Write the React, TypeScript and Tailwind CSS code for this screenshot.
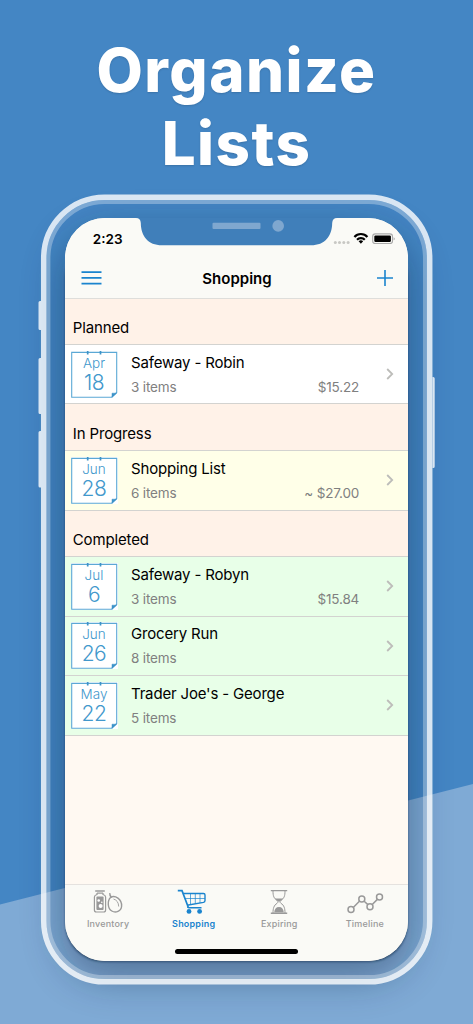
type Trip = { month: string; day: string; name: string; items: string; price?: string };
type Section = { title: string; tone: string; trips: Trip[] };

const sections: Section[] = [
  {
    title: 'Planned',
    tone: 'bg-white',
    trips: [{ month: 'Apr', day: '18', name: 'Safeway - Robin', items: '3 items', price: '$15.22' }],
  },
  {
    title: 'In Progress',
    tone: 'bg-[#ffffe8]',
    trips: [{ month: 'Jun', day: '28', name: 'Shopping List', items: '6 items', price: '~ $27.00' }],
  },
  {
    title: 'Completed',
    tone: 'bg-[#e8ffe8]',
    trips: [
      { month: 'Jul', day: '6', name: 'Safeway - Robyn', items: '3 items', price: '$15.84' },
      { month: 'Jun', day: '26', name: 'Grocery Run', items: '8 items' },
      { month: 'May', day: '22', name: "Trader Joe's - George", items: '5 items' },
    ],
  },
];

// Blue backdrop, diagonal highlight and the glassy phone body
const Backdrop = () => (
  <svg className="absolute inset-0" width="473" height="1024" viewBox="0 0 473 1024">
    <defs>
      <filter id="soft" x="-30%" y="-30%" width="160%" height="160%">
        <feGaussianBlur stdDeviation="20" />
      </filter>
      <filter id="tight" x="-10%" y="-10%" width="120%" height="120%">
        <feGaussianBlur stdDeviation="1" />
      </filter>
    </defs>
    <rect width="473" height="1024" fill="#4486c4" />
    <path d="M0 904.5 473 784V1024H0Z" fill="#7faad5" />
    <rect x="62" y="232" width="349" height="746" rx="46" fill="#0c2440" opacity="0.4" filter="url(#soft)" />
    <g fill="#fff" opacity="0.8">
      <path d="M41 301h-1a1.5 1.5 0 0 0-1.5 1.5v26a1.5 1.5 0 0 0 1.5 1.5h1zM41 358h-1a1.5 1.5 0 0 0-1.5 1.5v53a1.5 1.5 0 0 0 1.5 1.5h1zM41 431h-1a1.5 1.5 0 0 0-1.5 1.5v53.5a1.5 1.5 0 0 0 1.5 1.5h1zM432.5 377h.7a1.5 1.5 0 0 1 1.5 1.5v88a1.5 1.5 0 0 1-1.5 1.5h-.7z" />
    </g>
    <rect x="43.7" y="197.2" width="386" height="784.6" rx="61" fill="none" stroke="#fff" strokeWidth="5.5" opacity="0.8" />
    <rect x="48.4" y="201.9" width="376.6" height="775.2" rx="56.5" fill="none" stroke="#fff" strokeWidth="4" opacity="0.3" />
    <rect x="65.3" y="240" width="342.4" height="721.8" rx="38" fill="#0f2a45" opacity="0.6" filter="url(#tight)" />
  </svg>
);

// Notch cut-out with speaker and camera
const Notch = () => (
  <svg className="absolute left-[70px] top-0" width="203" height="28" viewBox="0 0 203 28">
    <path d="M0 0H1Q5.5 0 5.8 5C6 18 13 27.3 27 27.3H176C190 27.3 197 18 197.2 5Q197.5 0 202 0H203V-1H0Z" fill="#407fba" />
    <rect x="77.5" y="4.8" width="48" height="6.2" rx="1" fill="#7fa7cf" />
    <circle cx="143.2" cy="7.9" r="5.8" fill="#7fa7cf" />
  </svg>
);

const StatusIcons = () => (
  <svg width="62" height="14" viewBox="0 0 62 14">
    <g fill="#c8c8c4">
      <circle cx="2.3" cy="10.5" r="1.5" />
      <circle cx="6.5" cy="10.5" r="1.5" />
      <circle cx="10.8" cy="10.5" r="1.5" />
      <circle cx="15.1" cy="10.5" r="1.5" />
    </g>
    <g fill="none" stroke="#000" strokeWidth="2.2">
      <path d="M21.4 4.9a8.7 8.7 0 0 1 13 0" />
      <path d="M24 7.7a5.4 5.4 0 0 1 7.8 0" />
    </g>
    <path d="M27.9 11.8 25.6 9.3a3.3 3.3 0 0 1 4.6 0z" />
    <rect x="39.7" y="1.9" width="19.8" height="9.6" rx="2.6" fill="none" stroke="#aaa" strokeWidth="1.1" />
    <rect x="41.3" y="3.5" width="16.6" height="6.5" rx="1.2" />
    <path d="M60.6 5.2q1.2.5 1.2 1.5t-1.2 1.5z" fill="#aaa" />
  </svg>
);

const DateBadge = ({ month, day }: { month: string; day: string }) => (
  <div className="relative h-[47px] w-[47px] shrink-0 text-center text-[#4298cc]">
    <svg className="absolute inset-0" width="47" height="47" viewBox="0 0 47 47">
      <rect width="47" height="47" fill="#fff" />
      <path d="M.7 1.4H45.7V41.5L40.7 46.2H.7Z" fill="none" stroke="#5ba8d5" strokeWidth="1.1" />
      <path d="M41 46.3V42.2H45.6Z" fill="#3d93c8" stroke="#3d93c8" strokeWidth=".5" />
      <path d="M16.7 0v3.6M29.5 0v3.6" stroke="#3d93c8" strokeWidth="1.7" />
    </svg>
    <div className="relative flex flex-col pr-[1px] pt-[3px]">
      <span className="text-[13.5px] font-light leading-[18px]">{month}</span>
      <span className="text-[21px] font-light leading-[22px] tracking-[-0.5px]">{day}</span>
    </div>
  </div>
);

const TripRow = ({ trip, tone }: { trip: Trip; tone: string }) => (
  <div className={`flex h-[59.5px] items-center border-b border-[#d3d3d0] pl-[5.7px] pr-[13.5px] ${tone}`}>
    <DateBadge month={trip.month} day={trip.day} />
    <div className="ml-[13px] flex-1 pt-[1px]">
      <div className="text-[15px] leading-[22px] tracking-[-0.17px] text-black">{trip.name}</div>
      <div className="mt-[2px] flex justify-between text-[13.5px] leading-[22px] tracking-[-0.15px] text-[#808080]">
        <span>{trip.items}</span>
        <span>{trip.price}</span>
      </div>
    </div>
    <svg className="ml-[27px]" width="8" height="12" viewBox="0 0 8 12">
      <path d="m1.2 1 5 5-5 5" fill="none" stroke="#bdbdba" strokeWidth="1.8" />
    </svg>
  </div>
);

const InventoryIcon = () => (
  <svg width="30" height="26" viewBox="0 0 30 26" fill="none" stroke="#9a9a9a">
    <path d="M2.2 2h9.600" strokeWidth="1.5" />
    <path d="M4 4.2h6M4 4v1.5Q1.4 6.3 1.4 8v13q0 2 2 2h7.2q2 0 2-2V8Q12.6 6.3 10 5.5V4" strokeWidth="1.2" />
    <rect x="3.4" y="7.5" width="7.2" height="13.5" rx="1" fill="#999" stroke="none" />
    <g fill="#fff" stroke="none">
      <circle cx="5.7" cy="11.5" r="1.3" />
      <circle cx="7.6" cy="17" r="2" />
      <circle cx="8.8" cy="13.3" r=".8" />
    </g>
    <path d="M16.8 4.2q-.3 2.2 1.8 4.3" strokeWidth="1.5" />
    <path d="M17.8 8.3C22 6 29 10 28.6 17.2 28.2 22.5 22.5 24.2 18.8 22 14.800 19.800 13.800 12 17.800 8.300Z" strokeWidth="1.4" />
    <path d="M20.5 10q5 1.5 5.2 7.5" strokeWidth=".9" />
  </svg>
);

const CartIcon = () => (
  <svg className="mr-[4px]" width="30" height="26" viewBox="0 0 30 26" fill="none" stroke="#1a84ce">
    <path d="M.8 1.7H5L11.2 18" strokeWidth="1.7" />
    <path d="M6.2 4.5H26.5Q28 4.5 28 6V11.5Q28 13 26.5 13.4L10 16.3M24.5 18.8H12q-1.5 0-1.5-1.2" strokeWidth="1.4" />
    <path d="M8 9.5H28M13.5 4.5v11M18.3 4.5v10M23 4.5v9.5" strokeWidth=".7" />
    <circle cx="12" cy="22.4" r="2.4" fill="#1a84ce" stroke="none" />
    <circle cx="22.6" cy="22.4" r="2.4" fill="#1a84ce" stroke="none" />
  </svg>
);

const HourglassIcon = () => (
  <svg width="18" height="26" viewBox="0 0 18 26" fill="none" stroke="#999">
    <path d="M.8 1.6h16.4M.8 24.3h16.4" strokeWidth="1.4" />
    <path d="M3 2c0 5 .8 7.3 4.2 9.5 1 .7 1 2 0 2.7C3.8 16.3 3 19.5 3 24M15 2c0 5-.8 7.3-4.2 9.5-1 .7-1 2 0 2.7 3.4 2.1 4.2 5.3 4.2 9.8" strokeWidth="1" />
    <path d="M5 9.5h8Q11.5 11.5 9.5 12.5h-1Q6.5 11.5 5 9.5ZM4.2 23.6C4.5 20 6 18 9 18s4.5 2 4.8 5.6Z" fill="#999" stroke="none" />
  </svg>
);

const TimelineIcon = () => (
  <svg width="38" height="26" viewBox="0 0 38 26" fill="none" stroke="#999">
    <path d="m7 18.7 6.900-6.900M17.9 12l4 3.600M26 15.700l5.600-5.600" strokeWidth="1.5" />
    <g strokeWidth="1.5">
      <circle cx="5" cy="20.6" r="3" />
      <circle cx="15.8" cy="9.9" r="3" />
      <circle cx="24" cy="17.7" r="3" />
      <circle cx="33.5" cy="8" r="3" />
    </g>
  </svg>
);

const tabs = [
  { label: 'Inventory', Icon: InventoryIcon },
  { label: 'Shopping', Icon: CartIcon, active: true },
  { label: 'Expiring', Icon: HourglassIcon },
  { label: 'Timeline', Icon: TimelineIcon },
];

export default function App() {
  return (
    <div className="relative h-[1024px] w-[473px] overflow-hidden font-['Inter','Liberation_Sans',sans-serif]">
      <Backdrop />
      <div className="relative flex h-full flex-col items-center">
        <h1 className="h-[218.3px] pt-[33.5px] text-center text-[60px] font-extrabold leading-[73px] tracking-[1.5px] text-white [text-shadow:0_1px_2px_rgba(0,0,0,0.15)]">
          Organize
          <br />
          Lists
        </h1>

        <div className="relative flex h-[742.9px] w-[342.4px] flex-col overflow-hidden rounded-[40px] bg-[#fff9f2]">
          <header className="relative h-[80.7px] shrink-0 border-b border-[#dededb] bg-[#fafaf6]">
            <Notch />
            <div className="flex h-[40px] items-center justify-between pl-[27.5px] pr-[12.5px] pt-[1px]">
              <span className="text-[13.5px] font-semibold">2:23</span>
              <StatusIcons />
            </div>
            <div className="grid h-[40px] grid-cols-3 items-center pl-[15.5px] pr-[14.5px]">
              <svg width="21" height="14" viewBox="0 0 21 14">
                <path d="M.5 1.2h20M.5 6.9h20M.5 12.6h20" stroke="#1a84ce" strokeWidth="1.7" />
              </svg>
              <span className="justify-self-center pt-[1px] text-[15px] font-semibold">Shopping</span>
              <svg className="justify-self-end" width="16" height="16" viewBox="0 0 16 16">
                <path d="M0 8h16M8 0v16" stroke="#1a84ce" strokeWidth="1.6" />
              </svg>
            </div>
          </header>

          <main className="-mt-[0.6px] flex-1">
            {sections.map((section) => (
              <section key={section.title}>
                <h2 className="flex h-[46.6px] items-end border-b border-[#d3d3d0] bg-[#fff2e8] pb-[5px] pl-[7.5px] text-[15px] leading-[22px] tracking-[-0.15px]">
                  {section.title}
                </h2>
                {section.trips.map((trip) => (
                  <TripRow key={trip.name} trip={trip} tone={section.tone} />
                ))}
              </section>
            ))}
          </main>

          <nav className="h-[77px] shrink-0 border-t border-[#e5e2df] bg-[#fafaf6]">
            <div className="grid grid-cols-4 pt-[4px]">
              {tabs.map(({ label, Icon, active }) => (
                <div key={label} className="flex flex-col items-center">
                  <Icon />
                  <span className={`mt-[2px] text-[9px] leading-[13px] tracking-[0.2px] ${active ? 'font-semibold text-[#1a84ce]' : 'font-medium text-[#999]'}`}>
                    {label}
                  </span>
                </div>
              ))}
            </div>
            <div className="mx-auto mt-[19px] h-[4.6px] w-[123px] rounded-full bg-black" />
          </nav>
        </div>
      </div>
    </div>
  );
}
